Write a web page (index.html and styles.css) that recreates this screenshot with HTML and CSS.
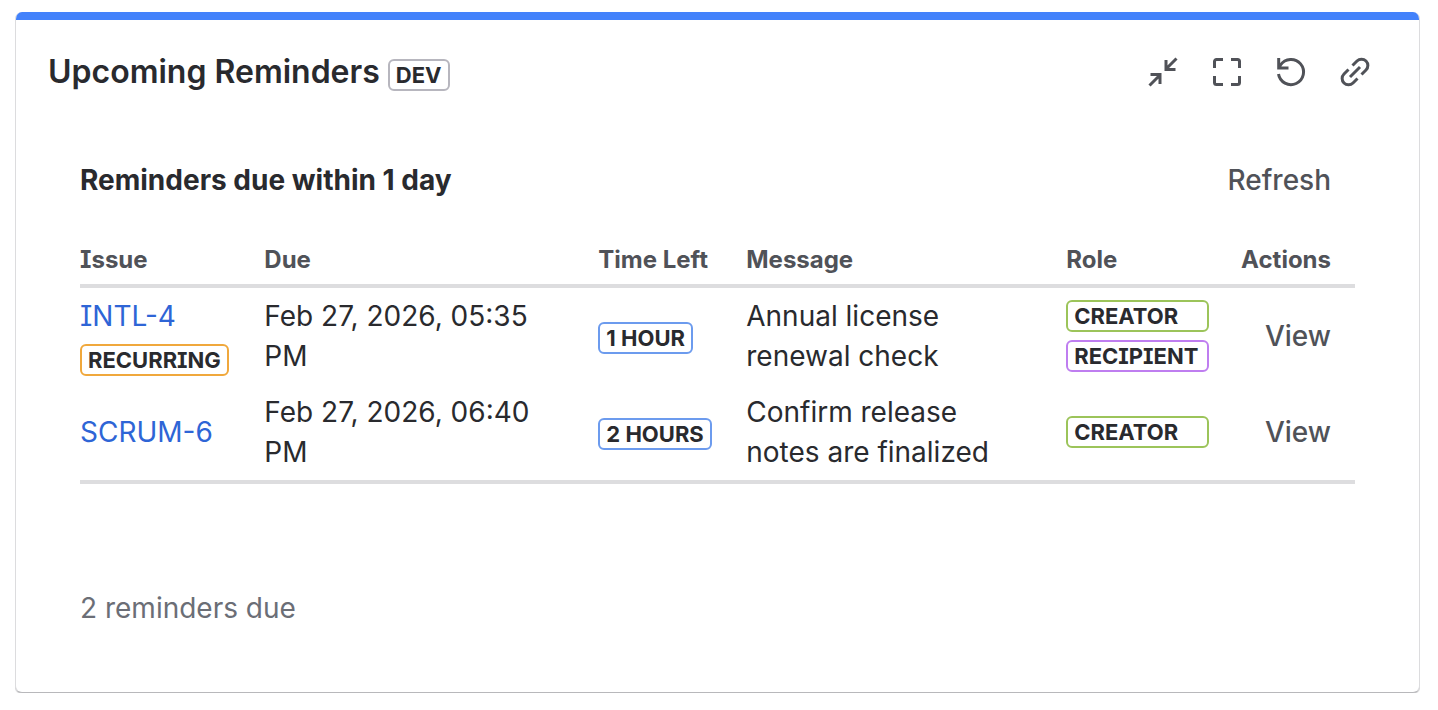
FILE: index.html
```
<!DOCTYPE html>
<html lang="en">
<head>
    <meta charset="UTF-8">
    <title>Upcoming Reminders</title>
    <link rel="stylesheet" href="styles.css">
</head>
<body>
    <section class="gadget">
        <div class="gadget-bar"></div>
        <header class="gadget-header">
            <h1>Upcoming Reminders</h1>
            <span class="badge badge-dev">DEV</span>
            <div class="toolbar">
                <button type="button" aria-label="Minimize">
                    <svg viewBox="0 0 32 32"><path d="M29.500 2.500L19 13M19 4v9.500H28.500M2.500 29.500L13 19M3.500 18.500H13V28"/></svg>
                </button>
                <button type="button" aria-label="Full screen">
                    <svg viewBox="0 0 32 32"><path d="M3.500 12V5.500a2 2 0 0 1 2-2H12M20 3.500h6.500a2 2 0 0 1 2 2V12M28.500 20v6.500a2 2 0 0 1-2 2H20M12 28.500H5.500a2 2 0 0 1-2-2V20"/></svg>
                </button>
                <button type="button" aria-label="Refresh gadget">
                    <svg viewBox="0 0 32 32"><path d="M3.700 2v10H13.500M3.500 18A12.600 12.600 0 1 0 5.500 9L3.800 11.800"/></svg>
                </button>
                <button type="button" aria-label="Copy link">
                    <svg viewBox="0 0 32 32"><path d="M13.500 9.500l4.500-4.500a6.200 6.200 0 0 1 9 9l-4.500 4.500M9.500 13.500L5 18a6.200 6.200 0 0 0 9 9l4.500-4.500M11 21L21 11"/></svg>
                </button>
            </div>
        </header>

        <div class="gadget-body">
            <div class="list-header">
                <h2>Reminders due within 1 day</h2>
                <button type="button" class="text-button">Refresh</button>
            </div>

            <table class="reminders">
                <thead>
                    <tr>
                        <th class="col-issue">Issue</th>
                        <th class="col-due">Due</th>
                        <th class="col-time">Time Left</th>
                        <th class="col-message">Message</th>
                        <th class="col-role">Role</th>
                        <th class="col-actions">Actions</th>
                    </tr>
                </thead>
                <tbody>
                    <tr>
                        <td>
                            <div class="issue">
                                <a href="#">INTL-4</a>
                                <span class="badge badge-recurring">RECURRING</span>
                            </div>
                        </td>
                        <td>Feb 27, 2026, 05:35 PM</td>
                        <td><span class="badge badge-time">1 HOUR</span></td>
                        <td>Annual license renewal check</td>
                        <td>
                            <div class="roles">
                                <span class="badge badge-creator">CREATOR</span>
                                <span class="badge badge-recipient">RECIPIENT</span>
                            </div>
                        </td>
                        <td class="actions"><button type="button" class="text-button">View</button></td>
                    </tr>
                    <tr>
                        <td>
                            <div class="issue">
                                <a href="#">SCRUM-6</a>
                            </div>
                        </td>
                        <td>Feb 27, 2026, 06:40 PM</td>
                        <td><span class="badge badge-time">2 HOURS</span></td>
                        <td>Confirm release notes are finalized</td>
                        <td>
                            <div class="roles">
                                <span class="badge badge-creator">CREATOR</span>
                            </div>
                        </td>
                        <td class="actions"><button type="button" class="text-button">View</button></td>
                    </tr>
                </tbody>
            </table>

            <p class="summary">2 reminders due</p>
        </div>
    </section>
</body>
</html>
```
FILE: styles.css
```
* {
    box-sizing: border-box;
}
body {
    margin: 12px 18px 16px 15px;
    background-color: #fff;
    color: #292a2e;
    font-family: Inter, "Liberation Sans", sans-serif;
    font-size: 28px;
    line-height: 40px;
    /* capital I with serifs */
    font-feature-settings: "cv08";
}
h1, h2, p {
    margin: 0;
}
button {
    padding: 0;
    border: none;
    background: none;
    color: #505258;
    font: inherit;
    cursor: pointer;
}
a {
    color: #2e65d6;
    text-decoration: none;
}
.gadget {
    overflow: hidden;
    border: 1px solid #dcdcde;
    border-top: none;
    border-bottom-color: #b8b8bb;
    border-radius: 7px;
    background-color: #fff;
    box-shadow: 0 1px 1px #c8c8ca;
}
.gadget-bar {
    height: 8px;
    background-color: #4382fb;
}
.gadget-header {
    display: flex;
    align-items: center;
    gap: 8px;
    padding: 32px 48px 32px 32px;
}
h1 {
    font-size: 32px;
    font-weight: 600;
}
.toolbar {
    display: flex;
    gap: 32px;
    margin-left: auto;
}
.toolbar button {
    display: flex;
}
.toolbar svg {
    width: 32px;
    height: 32px;
    fill: none;
    stroke: #505258;
    stroke-width: 3;
}
.badge {
    display: inline-block;
    padding: 0 6px;
    border: 2px solid;
    border-radius: 6px;
    font-size: 22px;
    font-weight: 700;
    line-height: 28px;
    white-space: nowrap;
}
.badge-dev {
    margin-top: 6px;
    border-color: #b7b6be;
}
.badge-recurring {
    border-color: #f0a83c;
}
.badge-time {
    border-color: #6c9bee;
}
.badge-creator {
    border-color: #9cc45a;
}
.badge-recipient {
    border-color: #bf7ef0;
}
.gadget-body {
    padding: 36px 64px 64px;
}
.list-header {
    display: flex;
    justify-content: space-between;
    align-items: center;
    padding-right: 24px;
}
h2 {
    font-size: 28px;
    font-weight: 700;
}
.text-button {
    font-weight: 500;
}
.reminders {
    width: 100%;
    margin-top: 32px;
    border-spacing: 0;
    border-bottom: 4px solid #dddddf;
    table-layout: fixed;
}
th {
    padding: 10px 16px 6px;
    border-bottom: 4px solid #dddddf;
    color: #505258;
    font-size: 24px;
    font-weight: 700;
    line-height: 36px;
    text-align: left;
    white-space: nowrap;
}
td {
    padding: 8px 16px;
    vertical-align: middle;
}
th:first-child, td:first-child {
    padding-left: 0;
}
th:last-child, td:last-child {
    padding-right: 24px;
}
.col-issue {
    width: 13.2%;
}
.col-due {
    width: 26.2%;
}
.col-time {
    width: 11.6%;
}
.col-message {
    width: 25.1%;
}
.col-role {
    width: 13.7%;
}
.col-actions, .actions {
    text-align: right;
}
.issue {
    display: flex;
    flex-direction: column;
    align-items: flex-start;
    gap: 8px;
}
.roles {
    display: flex;
    flex-direction: column;
    gap: 8px;
}
.summary {
    margin-top: 104px;
    color: #6b6e76;
}
```
